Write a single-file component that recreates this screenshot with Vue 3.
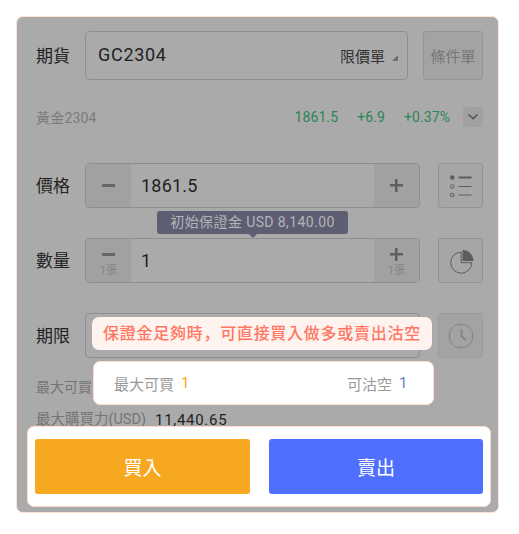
<script setup>
const green = ['1861.5', '+6.9', '+0.37%']
</script>

<template>
  <div class="panel">
    <div class="row first">
      <span class="label">期貨</span>
      <div class="field select">
        <span class="code">GC2304</span>
        <span class="type">限價單</span>
        <span class="tri"></span>
      </div>
      <div class="cond">條件單</div>
    </div>

    <div class="info">
      <span class="name">黃金2304</span>
      <span class="quotes">
        <span v-for="g in green" :key="g">{{ g }}</span>
      </span>
      <span class="chev">
        <svg width="12" height="8" viewBox="0 0 12 8"><path d="M1.5 1.5 6 5.7l4.5-4.2" fill="none" stroke="#555" stroke-width="1.6"/></svg>
      </span>
    </div>

    <div class="row price">
      <span class="label">價格</span>
      <div class="field stepper">
        <span class="step"><i class="minus"></i></span>
        <span class="val">1861.5</span>
        <span class="step plus-step"><i class="plus"></i></span>
      </div>
      <div class="icon-btn">
        <svg width="24" height="24" viewBox="0 0 24 24" fill="none" stroke="#5c5c5c">
          <circle cx="3.3" cy="3.5" r="2.200" fill="#5c5c5c" stroke="none"/>
          <path d="M9.500 3.500h13" stroke-width="2"/>
          <circle cx="3.300" cy="12.500" r="1.800"/>
          <path d="M9.500 12.500h13"/>
          <circle cx="3.300" cy="21" r="1.800"/>
          <path d="M9.500 21h13"/>
        </svg>
      </div>
    </div>

    <div class="row qty">
      <div class="tooltip">初始保證金 USD 8,140.00</div>
      <span class="label">數量</span>
      <div class="field stepper">
        <span class="step stack"><i class="minus"></i><small>1張</small></span>
        <span class="val">1</span>
        <span class="step plus-step stack"><i class="plus"></i><small>1張</small></span>
      </div>
      <div class="icon-btn">
        <svg width="26" height="26" viewBox="0 0 26 26" fill="none">
          <path d="M13.200 4.200a10.500 10.500 0 1 0 10.500 10.500H13.200z" stroke="#5c5c5c" stroke-width="1"/>
          <path d="M14.500 2a11 11 0 0 1 11 11H14.500z" fill="#5c5c5c"/>
        </svg>
      </div>
    </div>

    <div class="row period">
      <span class="label">期限</span>
      <div class="field blank"></div>
      <div class="icon-btn dim">
        <svg width="26" height="26" viewBox="0 0 26 26" fill="none" stroke="#858585">
          <circle cx="13" cy="13" r="12" stroke-width="1"/>
          <path d="M13.500 6.500v7l4.500 3.500" stroke-width="2"/>
          <path d="M13 1v2M13 23v2M1 13h2M23 13h2"/>
        </svg>
      </div>
    </div>

    <div class="mx"><span>最大可買</span></div>
    <div class="power"><span class="k">最大購買力(USD)</span><span class="v">11,440.65</span></div>

    <div class="tip">保證金足夠時，可直接買入做多或賣出沽空</div>
    <div class="card">
      <span class="c-k">最大可買</span><span class="c-y">1</span>
      <span class="c-sp"></span>
      <span class="c-k">可沽空</span><span class="c-b">1</span>
    </div>
    <div class="actions">
      <div class="btn buy">買入</div>
      <div class="btn sell">賣出</div>
    </div>
  </div>
</template>

<style>
html, body { margin: 0; background: #fff; }
</style>

<style scoped>
.panel {
  position: relative;
  box-sizing: border-box;
  width: 483px;
  height: 497px;
  margin: 16px 0 0 16px;
  padding: 14px 15px 0 19px;
  background: #aaaaaa;
  border: 1px solid #ffe2d7;
  border-radius: 7px;
  font-family: Roboto, "Noto Sans CJK TC", sans-serif;
  color: #222;
  display: flex;
  flex-direction: column;
}
.row { position: relative; display: flex; align-items: stretch; height: 45px; }
.first { height: 49px; }
.price { margin-top: 36px; }
.qty { margin-top: 30px; }
.period { margin-top: 30px; }
.label { width: 49px; flex: none; align-self: center; font-size: 17px; color: #222; line-height: 24px; }
.field {
  box-sizing: border-box;
  flex: none;
  width: 335px;
  border: 1px solid #8f8f8f;
  border-radius: 4px;
  display: flex;
  align-items: center;
}
.select { width: 323px; padding: 0 9px 0 12px; }
.code { font-size: 18px; font-weight: 400; letter-spacing: .7px; color: #222; flex: 1; margin-top: -2px; }
.type { font-size: 15px; color: #333; }
.tri {
  width: 0; height: 0; margin-left: 7px; margin-top: 4px;
  border-left: 6px solid transparent;
  border-bottom: 6px solid #6e6e6e;
}
.cond {
  box-sizing: border-box;
  width: 60px;
  margin-left: 15px;
  border: 1px solid #949494;
  border-radius: 3px;
  background: #a3a3a3;
  color: #767676;
  font-size: 15px;
  display: flex;
  align-items: center;
  justify-content: center;
}
.info { display: flex; align-items: center; height: 20px; margin-top: 27px; }
.name { font-size: 14px; color: #7b7b7b; flex: 1; letter-spacing: .2px; }
.quotes { display: flex; gap: 19px; font-size: 14px; color: #2a8557; margin-right: 13px; letter-spacing: .1px; }
.chev {
  width: 20px; height: 20px; background: #a1a1a1; border-radius: 2px;
  display: flex; align-items: center; justify-content: center;
}
.stepper { overflow: hidden; }
.step {
  width: 45px; height: 100%; flex: none; background: #a1a1a1;
  display: flex; align-items: center; justify-content: center;
}
.val { flex: 1; padding-left: 10px; font-size: 18px; font-weight: 400; letter-spacing: .2px; color: #222; }
.minus { display: block; width: 13px; height: 2.500px; background: #666; }
.plus { display: block; width: 13px; height: 13px; background:
  linear-gradient(#5f5f5f,#5f5f5f) center/100% 2.500px no-repeat,
  linear-gradient(#5f5f5f,#5f5f5f) center/2.500px 100% no-repeat; }
.stack { flex-direction: column; justify-content: flex-start; padding-top: 9px; box-sizing: border-box; }
.stack .minus { margin: 5.250px 0; }
.stack small { font-size: 11px; line-height: 13px; color: #858585; margin-top: 3px; }
.icon-btn {
  box-sizing: border-box;
  width: 45px;
  margin-left: 18px;
  border: 1px solid #949494;
  border-radius: 3px;
  background: #a6a6a6;
  display: flex;
  align-items: center;
  justify-content: center;
}
.dim { background: #a3a3a3; border-color: #9b9b9b; }
.tooltip {
  position: absolute;
  left: 121px; top: -27px;
  width: 191px; height: 23px;
  box-sizing: border-box;
  background: #5e5e72;
  border-radius: 3px;
  color: #b4b4b8;
  font-size: 14px;
  line-height: 23px;
  text-align: center;
  letter-spacing: .4px;
  z-index: 1;
}
.tooltip::after {
  content: ""; position: absolute; left: 50%; bottom: -4px; margin-left: -4px;
  border-left: 4px solid transparent; border-right: 4px solid transparent;
  border-top: 4px solid #5e5e72;
}
.mx { margin-top: 19px; height: 20px; line-height: 20px; font-size: 14px; color: #757575; }
.power { margin-top: 13px; height: 20px; line-height: 20px; display: flex; align-items: center; gap: 9px; }
.k { font-size: 14.500px; color: #757575; }
.v { font-size: 15px; color: #222; letter-spacing: .7px; }
.tip {
  position: absolute;
  left: 75px; top: 300px;
  width: 340px; height: 33px;
  box-sizing: border-box;
  background: #fff3ef;
  border-radius: 7px;
  color: #ff7663;
  font-family: Roboto, "Noto Sans CJK JP", sans-serif;
  font-size: 16px;
  letter-spacing: .74px;
  font-weight: 500;
  line-height: 33px;
  text-align: center;
  white-space: nowrap;
}
.card {
  position: absolute;
  left: 76px; top: 344px;
  width: 341px; height: 44px;
  box-sizing: border-box;
  background: #fff;
  border: 1px solid #ffdccf;
  border-radius: 7px;
  padding: 0 28px 0 20px;
  display: flex;
  align-items: center;
  font-size: 15px;
}
.c-k { color: #999; }
.c-sp { flex: 1; }
.c-y { color: #f6a821; margin-left: 7px; width: 6px; }
.c-b { color: #5b82d6; margin-left: 7px; width: 6px; }
.actions {
  position: absolute;
  left: 10px; top: 409px;
  width: 464px; height: 81px;
  box-sizing: border-box;
  background: #fff;
  border: 1px solid #ffdccf;
  border-radius: 7px;
  padding: 12px 7px 0;
  display: flex;
  justify-content: space-between;
  align-items: flex-start;
}
.btn {
  height: 55px;
  border-radius: 3px;
  color: #fff;
  font-size: 19px;
  display: flex;
  align-items: center;
  justify-content: center;
}
.buy { width: 215px; background: #f6a821; }
.sell { width: 214px; background: #4f6fff; }
</style>
